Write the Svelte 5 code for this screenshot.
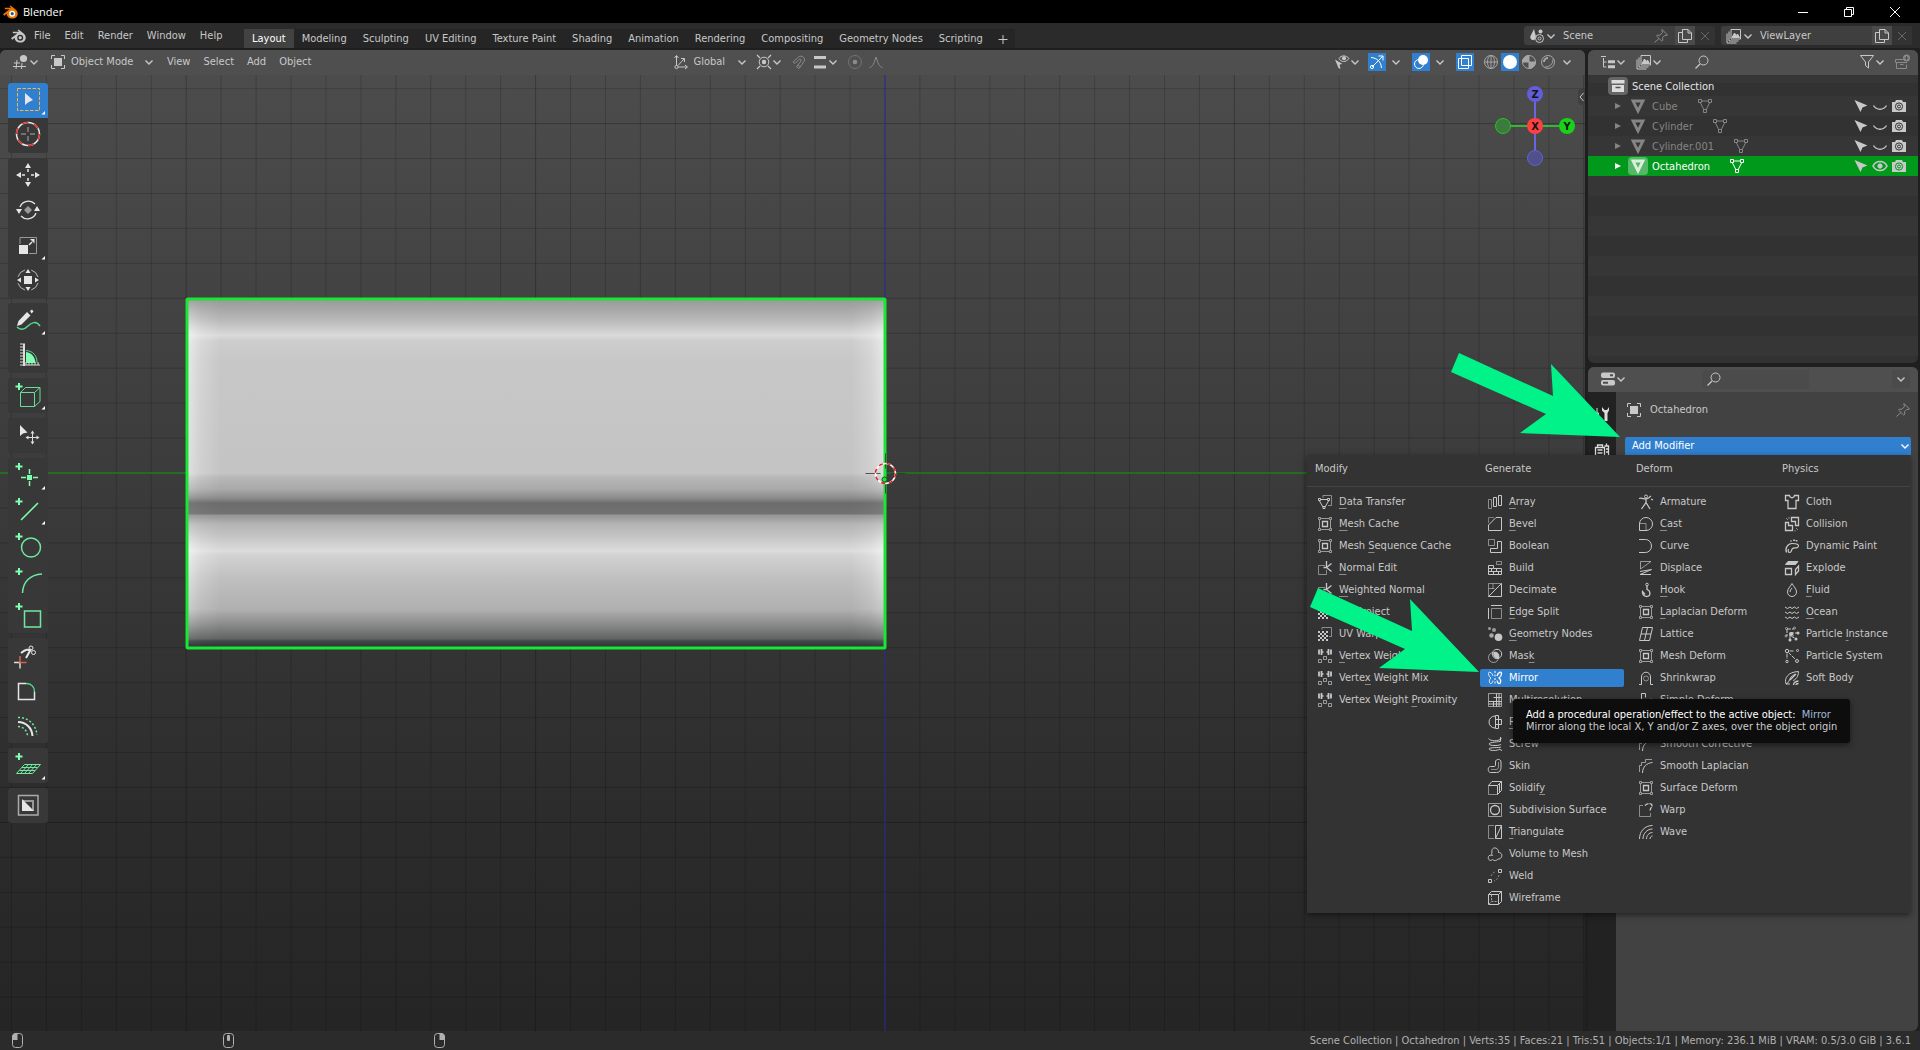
<script>
    const MENUS = ["File", "Edit", "Render", "Window", "Help"];
    const WORKSPACES = ["Layout", "Modeling", "Sculpting", "UV Editing", "Texture Paint", "Shading", "Animation", "Rendering", "Compositing", "Geometry Nodes", "Scripting"];
    const OBJECTS = [
        { name: "Cube" },
        { name: "Cylinder" },
        { name: "Cylinder.001" },
        { name: "Octahedron", active: true },
    ];

    // [label, icon, index of the underlined letter]
    const MODIFIERS = [
        { title: "Modify", items: [
            ["Data Transfer", "dataTransfer", 0],
            ["Mesh Cache", "meshDeform", 0],
            ["Mesh Sequence Cache", "meshDeform", 5],
            ["Normal Edit", "normalEdit", 0],
            ["Weighted Normal", "normalEdit", 0],
            ["UV Project", "uv"],
            ["UV Warp", "uv"],
            ["Vertex Weight Edit", "vertexWeight", 0],
            ["Vertex Weight Mix", "vertexWeight", 5],
            ["Vertex Weight Proximity", "vertexWeight", 14],
        ]},
        { title: "Generate", items: [
            ["Array", "array", 0],
            ["Bevel", "bevel", 0],
            ["Boolean", "boolean"],
            ["Build", "build"],
            ["Decimate", "decimate"],
            ["Edge Split", "edgeSplit", 0],
            ["Geometry Nodes", "geoNodes", 0],
            ["Mask", "mask", 3],
            ["Mirror", "mirror"],
            ["Multiresolution", "multires"],
            ["Remesh", "remesh", 0],
            ["Screw", "screw"],
            ["Skin", "skin"],
            ["Solidify", "solidify", 7],
            ["Subdivision Surface", "subsurf"],
            ["Triangulate", "triangulate", 0],
            ["Volume to Mesh", "volume"],
            ["Weld", "weld"],
            ["Wireframe", "wireframe"],
        ]},
        { title: "Deform", items: [
            ["Armature", "armature"],
            ["Cast", "cast", 0],
            ["Curve", "curve"],
            ["Displace", "displace"],
            ["Hook", "hook", 0],
            ["Laplacian Deform", "meshDeform", 0],
            ["Lattice", "lattice"],
            ["Mesh Deform", "meshDeform"],
            ["Shrinkwrap", "shrinkwrap"],
            ["Simple Deform", "simpleDeform"],
            ["Smooth", "smooth"],
            ["Smooth Corrective", "smooth"],
            ["Smooth Laplacian", "smooth"],
            ["Surface Deform", "meshDeform"],
            ["Warp", "warp"],
            ["Wave", "wave"],
        ]},
        { title: "Physics", items: [
            ["Cloth", "cloth"],
            ["Collision", "collision"],
            ["Dynamic Paint", "dynamicPaint"],
            ["Explode", "explode"],
            ["Fluid", "fluid", 0],
            ["Ocean", "ocean", 0],
            ["Particle Instance", "particleInstance", 9],
            ["Particle System", "particleSystem"],
            ["Soft Body", "softBody"],
        ]},
    ];

    // 16x16 glyphs, stroked with currentColor
    const ICONS = {
        blender: `<g stroke="none" fill="currentColor"><path d="M1 10.2 7.5 5.2H2.8V3.8h6.400L7.600 2.600l1-1.200 5 4c4 3.500 2 9-3.200 9.200-3.400 0-5.700-2.200-5.700-4.900L2.300 11.700Z"/></g><circle cx="10.200" cy="9.700" r="3" fill="var(--hole, #2b2b2b)" stroke="none"/><circle cx="10.200" cy="9.700" r="1.600" fill="var(--pupil, currentColor)" stroke="none"/>`,
        chevron: `<path d="M4.500 6.500 8 10l3.500-3.500" stroke-width="1.400"/>`,
        close: `<path d="M4 4l8 8M12 4l-8 8"/>`,
        pin: `<path d="M9 1.500 14.500 7l-1.500.5-1-.3-2.500 2.500.3 2.500-1 1L3.500 8l1-1 2.500.3L9.500 4.500 9 3ZM6 10.500 1.500 14.500"/>`,
        copy: `<path d="M5.500 1.500h5.500l3.500 3.500v6.500h-9Z M11 1.500V5h3.500"/><path d="M5.500 4.500h-4v10h9v-3" />`,
        scene: `<path d="M5 1 1.500 8c-.8 2.500 1 4.200 3 4.200C6 12 7 10 6.800 8Z" fill="currentColor" stroke="none"/><circle cx="11.500" cy="3.500" r="2" fill="currentColor" stroke="none"/><circle cx="10.500" cy="10.500" r="4"/><circle cx="10.500" cy="10.500" r="1.500"/>`,
        layers: `<path d="M5 1.500h9.500V11H5Z"/><path d="M6 9.500 8.500 5l1.800 2.500L11.500 6l2 3.500Z" fill="currentColor"/><path d="M3 3.500v9.500h9.500M1 5.500V15h9.500" stroke-width="1"/>`,
        viewport: `<path d="M4 6 3 15M9 9l-.5 6M1 9h6M0 12.500h13M12 9v0"/><circle cx="10.500" cy="4.500" r="3.600" fill="currentColor" stroke="none"/>`,
        object: `<path d="M1.500 5V1.500H5M11 1.500h3.500V5M14.500 11v3.500H11M5 14.500H1.500V11"/><rect x="4" y="4" width="8" height="8" fill="currentColor" stroke="none"/>`,
        axes: `<path d="M3.500 13V2M1.500 4l2-2.500 2 2.500M3.500 13H14M12 11l2.500 2-2.500 2M5 11.500 11 5M8 4.500h3.500V8"/><circle cx="3.500" cy="13" r="1.600" fill="#4d4d4d"/>`,
        pivot: `<circle cx="8" cy="8" r="4.800"/><circle cx="8" cy="8" r="2.200" fill="currentColor" stroke="none"/><path d="M1 1l3 3M15 1l-3 3M1 15l3-3M15 15l-3-3" stroke-width="1.200"/>`,
        magnet: `<path d="M2 8 7.500 3c3-2.500 7.500 1 5.500 4.500L8 14.500 5.500 12.800 10 7c.8-1.500-.8-2.500-2-1.600L4 9.500ZM7 11l2.300 1.800"/>`,
        increment: `<path d="M2 3.500h12M2 13h12" stroke-width="3"/>`,
        proportional: `<circle cx="8" cy="8" r="6.500" opacity=".6"/><circle cx="8" cy="8" r="2.300" fill="currentColor" stroke="none"/>`,
        falloff: `<path d="M1.500 13.500C5 13 6 9 8 3c2 6 3 10 6.500 10.500"/>`,
        visibility: `<path d="M5 4.500C7 1 12 1 15 4.500 12 8.500 7 8.500 5 4.500Z"/><circle cx="10" cy="4.300" r="2" fill="currentColor" stroke="none"/><path d="M1 5.500 8.500 10 5.500 10.500 6.500 15 4.500 14Z" fill="currentColor" stroke="none"/>`,
        gizmo: `<path d="M3 13 14 2M9.500 2H14v4.500M2 3.500c6 .5 10 4 10.500 10.500"/><circle cx="3" cy="13" r="1.600"/>`,
        overlays: `<circle cx="10" cy="6" r="5" fill="currentColor" stroke="none"/><circle cx="6" cy="10" r="4.500"/>`,
        xray: `<path d="M4.500 1.500h10v10h-10Z"/><path d="M1.500 4.500h10v10h-10Z"/><path d="M4.500 6v5.500H10" stroke-dasharray="2 1"/>`,
        sphereWire: `<circle cx="8" cy="8" r="6.500"/><path d="M8 1.500v13M1.500 8h13"/><ellipse cx="8" cy="8" rx="3.500" ry="6.500"/>`,
        sphereSolid: `<circle cx="8" cy="8" r="7" fill="currentColor" stroke="none"/>`,
        sphereMaterial: `<circle cx="8" cy="8" r="6.500"/><path d="M8 8V1.500A6.500 6.500 0 0 0 1.500 8ZM8 8h6.500A6.500 6.500 0 0 1 8 14.500Z" fill="currentColor"/>`,
        sphereRender: `<circle cx="8" cy="8" r="6.500"/><path d="M4 8a4 4 0 0 1 4-4" stroke-width="2"/><path d="M13 5c0 5-3 8-8 8"/>`,
        outliner: `<path d="M1 2.500h5M3.500 4v9h3M3.500 8h3"/><path d="M8 7.800h7M8 12.800h7" stroke-width="3"/>`,
        search: `<circle cx="9.500" cy="6.500" r="4.500"/><path d="M6 10 1.500 14.500" stroke-width="1.300"/>`,
        filter: `<path d="M1.500 1.500h13L9.500 8v6L6.500 11.500V8Z"/>`,
        newCollection: `<path d="M9 5.500H1.500v3H13M2.500 8.500v6h10v-4M6 10.500h3.500"/><circle cx="12.500" cy="4" r="3.500" fill="currentColor" stroke="none"/><path d="M12.500 2v4M10.500 4h4" stroke="#4d4d4d"/>`,
        collection: `<path d="M1.500 2h13v3.500h-13Z" fill="currentColor" stroke="none"/><path d="M2 7h12v7H2Z" fill="currentColor" stroke="none"/><path d="M5.500 9.500h5" stroke="#555" stroke-width="1.500"/>`,
        mesh: `<path d="M3 3h10L8 13Z" stroke-width="2.800"/>`,
        meshData: `<path d="M4.500 3h7M3.500 5 7 12M12.500 5 9 12"/><path d="M1.500 1.500h3v3h-3ZM11.500 1.500h3v3h-3ZM6.500 11.500h3v3h-3Z"/>`,
        expand: `<path d="M4 4l8 4-8 4Z" fill="currentColor" stroke="none"/>`,
        cursor: `<path d="M1.500 2 14.500 7.500 9.500 9.500 7.500 14Z" fill="currentColor" stroke="none"/>`,
        eyeClosed: `<path d="M1.500 7.500c3 5 10 5 13 0" stroke-width="1.300"/>`,
        eyeOpen: `<path d="M1 8c3-6 11-6 14 0-3 6-11 6-14 0Z" stroke-width="1.600"/><circle cx="8" cy="8" r="2.200" fill="currentColor"/>`,
        camera: `<path d="M1 4h3l1-2h6l1 2h3v10H1Z" fill="currentColor" stroke="none"/><circle cx="8" cy="8.500" r="3.600" stroke="var(--hole, #333)" /><circle cx="8" cy="8.500" r="1.500" stroke="var(--hole, #333)"/>`,
        properties: `<rect x="1" y="1.500" width="14" height="5.500" rx="2" fill="currentColor" stroke="none"/><rect x="1" y="9" width="14" height="5.500" rx="2" fill="currentColor" stroke="none"/><path d="M10 4.200h3M3 11.700h5" stroke="#4d4d4d" stroke-width="2"/>`,
        tool: `<path d="M3 2v5M1.500 7h3v7h-3Z" fill="currentColor"/><path d="M8 1v3.500l2.500 2.500V15h3V7L15 4.500V1l-2 3h-2.500Z" fill="currentColor" stroke="none"/>`,
        render: `<path d="M1.500 5.500h9v8.500h-9ZM3.500 8h5M3.500 11h5M3.500 5.500v-2.500h5v2.500" stroke-width="1.300"/><path d="M10.500 4h4v10h-4M12.500 4V1.500M12 7h2M12 10h2" stroke-width="1.300"/>`,

        meshDeform: `<path d="M4 2.500h8M4 13.500h8M2.500 4v8M13.500 4v8" opacity=".7"/><path d="M1.500 1.500h2v2h-2ZM12.500 1.500h2v2h-2ZM1.500 12.500h2v2h-2ZM12.500 12.500h2v2h-2Z" opacity=".7"/><path d="M5.500 5.500h5v5h-5Z" stroke-width="1.300"/>`,
        dataTransfer: `<path d="M6 1.500h8.500v10H11M6 1.500V4" opacity=".6"/><path d="M3.500 5.500h7M2.500 7 6 13M11.500 7 8 13M1.500 4.500h2v2h-2ZM10.500 4.500h2v2h-2ZM6 12.500h2v2H6Z"/>`,
        normalEdit: `<path d="M8 5.500H1.500v9h8V10" opacity=".6"/><path d="M14.500 3.500 9.500 7.500l5 4M9.500 1v6.500H6.500" stroke-width="1.300"/>`,
        uv: `<path d="M5 3.500v-2h9.500v9H12" opacity=".6"/><path d="M1 6h10M1 10h10M1 14h10" stroke-width="2" stroke-dasharray="2 2"/><path d="M3 8h8M3 12h8" stroke-width="2" stroke-dasharray="2 2"/>`,
        vertexWeight: `<path d="M2 1.500v5M4.500 1v6M11.500 1v6M14 1.500v5" stroke-width="1.800"/><path d="M4.500 4h2M9.500 4h2" stroke-width="1.500"/><path d="M1.500 11.500h3v3h-3ZM6.500 8.500h3v3h-3ZM11.500 11.500h3v3h-3Z" opacity=".7"/>`,
        array: `<path d="M1.500 5.500h3v9h-3Z" opacity=".6"/><path d="M6.500 3.500h3v9h-3ZM11.500 1.500h3v10h-3Z"/>`,
        bevel: `<path d="M1.500 7V1.500H7" opacity=".5"/><path d="M1.500 14.500V9L9 1.500h5.500v13Z"/>`,
        boolean: `<path d="M1.500 1.500h6v6h-6Z" opacity=".6"/><path d="M10.500 3.500h4v11h-11v-4h7Z"/>`,
        build: `<path d="M9.500 1.500h5v3h-5Z" opacity=".6"/><path d="M1.500 5.500h5v3h8v6h-13ZM1.500 8.500h5M1.500 11.500h13M9.500 8.500v3M4.500 8.500v3M6.500 11.500v3M11.500 11.500v3"/>`,
        decimate: `<path d="M1.500 14.500v-13h13M6 1.500V7M1.500 6.500h6" opacity=".6"/><path d="M14.500 1.500v13h-13Z"/>`,
        edgeSplit: `<path d="M4.500 4.500h10v10h-10Z" opacity=".6"/><path d="M1.500 4v11M4 1.500h11"/>`,
        geoNodes: `<g fill="currentColor" stroke="none"><circle cx="11.500" cy="11.300" r="3.800"/><circle cx="4.500" cy="9.500" r="2.200" opacity=".8"/><circle cx="7" cy="4" r="2" opacity=".7"/><circle cx="2.500" cy="2.500" r="1.500" opacity=".7"/></g>`,
        mask: `<circle cx="6.500" cy="9.500" r="5" opacity=".7"/><circle cx="10" cy="6" r="4.700"/><path d="M7 4.500c3-1.500 6 2 4.500 5.500C8 10.500 6 8 7 4.500Z" fill="currentColor"/>`,
        mirror: `<path d="M8 1v14" stroke-dasharray="2 1.500"/><path d="M6 6C5 2 1.500 1 1.500 3.500c0 2 1 3.500 2.500 4.500-1.500 1-2 2.500-1.500 4.500.8 2 3 1 3.500-2" opacity=".8"/><path d="M10 6c1-4 4.500-5 4.500-2.500 0 2-1 3.500-2.500 4.500 1.500 1 2 2.500 1.500 4.500-.8 2-3 1-3.500-2" stroke-width="1.300"/>`,
        multires: `<path d="M1.500 1.500h13v13h-13Z" opacity=".7"/><path d="M1.500 9.500h13M6.500 9.500v5M6.500 5.500h8M1.500 12h13M9.500 1.500v13M12 1.500v13" />`,
        remesh: `<path d="M8 2a6 6 0 0 0 0 12"/><path d="M8.500 1.500h3v13h-3ZM8.500 5.500h6v5h-6"/>`,
        screw: `<path d="M1.500 2.500c2 3 10 3 13 0M2 8c0-2 11-2 12-3M2 8c0 2 12 2 12 0M2 13c0-2 11-1 12-2M2 13c1 2 8 2 11 0M13.500 1v4M13.500 13l1 2"/>`,
        skin: `<path d="M3.500 8.500h3.500c1 0 1.500-.5 1.500-1.500V4c0-3.500 5.500-3.500 5.500 0v5.500c0 3-1.500 5-4.500 5h-6c-3 0-3-6 0-6Z"/><path d="M11.500 4v5c0 1.500-1 2.500-2.500 2.500H4" opacity=".6"/>`,
        solidify: `<path d="M1.500 5.500v9h9" opacity=".6"/><path d="M1.500 5.500 5 1.500h9.500v9l-4 4v-9h-9M10.500 5.500l4-4M12.500 3.500v9"/>`,
        subsurf: `<path d="M1.500 1.500h13v13h-13Z" opacity=".7"/><circle cx="8" cy="8" r="4.500" stroke-width="1.300"/>`,
        triangulate: `<path d="M7 1.500H1.500v13H7" opacity=".6"/><path d="M8.500 1.500h6v13h-6ZM8.500 14.500l6-13"/>`,
        volume: `<path d="M5 6C4 0 12 1 11.500 6.500c5 0 4 7-.5 6.500-2 2.500-4.500 1.500-5.500.5C3 16 .5 13 1.500 10.500 2 9 4 9 5.500 9.500 4.500 8.500 4.500 7 5 6Z"/>`,
        weld: `<path d="M11.500 1.500h3v3h-3ZM1.500 11.500h3v3h-3Z"/><path d="M4 8c1-2.500 3-4 5-4.500M12 7c-.5 3-2.500 5-5 6" stroke-dasharray="2 1.500" opacity=".6"/>`,
        wireframe: `<path d="M1.500 4.500h10v10h-10ZM1.500 4.500l3-3h10v10l-3 3M11.500 4.500l3-3"/><path d="M4.500 5v6.500H11M2 14l2.500-2.500" stroke-dasharray="2 1.200" opacity=".8"/>`,
        armature: `<circle cx="8" cy="2.500" r="1.500"/><path d="M1 4.500c3-1 4 .5 7 .5s3-2 5-3M8 5v3.500L3.500 15M8 8.500l4 6.500M13 5l2 1" stroke-width="1.300"/>`,
        cast: `<path d="M1.500 14.500V8a6.500 6.500 0 1 1 6.500 6.500Z"/><path d="M1.500 7.500h6.500v7" opacity=".6"/>`,
        curve: `<path d="M1 1.500h6.500a6 6.500 0 0 1 0 13H1"/>`,
        displace: `<path d="M2.500 9V1.500H13L2.500 9" opacity=".7"/><path d="M2 11.500l11.500-2L2 14.500h11"/>`,
        hook: `<circle cx="9" cy="2.500" r="1.300"/><path d="M9 4v3.500c4 1.500 4 7-.5 7-3 0-4.500-2.500-4-5l2.500 3" stroke-width="1.300"/>`,
        lattice: `<path d="M4.500 1.500h10l-3 13h-10ZM9.500 1.500l-3 13M3 8h10"/>`,
        shrinkwrap: `<path d="M1 14.500h2.500V7a4.500 4.800 0 0 1 9 0v7.500H15"/><circle cx="8" cy="8.500" r="2.500" opacity=".6"/>`,
        simpleDeform: `<path d="M3.500 14.500V1.500h4v4M7.500 14V9l6-2" /><path d="M7.500 14.500h7V7" opacity=".6"/>`,
        smooth: `<path d="M1.500 14V7.500h2v-3h4v-3H14" opacity=".7"/><path d="M4.500 15c0-6 4-10 10-10.500"/>`,
        warp: `<path d="M5 3.500H1.500v11h11V11" opacity=".6"/><path d="M7 3.500c2-2.500 7-2.500 7 0s-2 2-2 6" stroke-width="1.300" stroke-dasharray="4 1"/>`,
        wave: `<path d="M1.500 15C1.500 7 7 1.500 14.500 1.500M5 15c0-5.500 4-10 9.500-10M8.500 15c0-3.500 2.500-6.500 6-6.500M12 15c0-1.500 1-3 2.500-3"/>`,
        cloth: `<path d="M1.500 1.500h4c.5 3 4.500 3 5 0h4v5h-2.500v8H4v-8H1.500Z" stroke-width="1.300"/>`,
        collision: `<path d="M7.500 1.500h7v8h-3v-4h-4ZM1.500 6.500h3v3h4v5h-7Z" stroke-width="1.300"/><path d="M2 2l2 2M5 1v2M12 12l2 2M11 14v1.500" opacity=".6"/>`,
        dynamicPaint: `<path d="M2.500 14.500C.5 10 4 5.500 8 5.500c5 0 7.500 1 6 3.500-1 1.800-4 0-5.500 1.500-1.500 1.300-.5 4-3 4-1.500 0-1.500-2-1-3.500" stroke-width="1.200"/><path d="M7 2.500v1M10 1.500v1.500M12.500 2v1.500" stroke-width="1.800"/>`,
        explode: `<path d="M4 1.500h10L11.500 4.500h-10Z" fill="currentColor"/><path d="M1.500 8.500h6v6h-6Z" stroke-width="1.300"/><path d="M14.500 6v5L11.500 14.500V9.500Z" stroke-width="1.300"/>`,
        fluid: `<path d="M8 1.500c2 3.500 4.500 5.500 4.500 8.500a4.500 4.500 0 0 1-9 0c0-3 2.500-5 4.500-8.500Z"/><path d="M6 10c0-1.500 1-2.500 2-4"/>`,
        ocean: `<path d="M1 3l2.500 1.500L6 3l2 1.500L10.500 3l2 1.500L15 3M1 8l2.500 1.500L6 8l2 1.500L10.500 8l2 1.500L15 8M1 13l2.500 1.500L6 13l2 1.500 2.500-1.500 2 1.500L15 13"/>`,
        particleInstance: `<path d="M3 3h7M3 3v7M6 13V9l4 3M6 7h8M8 6l2 6" stroke-dasharray="4 1"/><circle cx="7" cy="8" r="2" fill="currentColor" stroke="none"/><g fill="currentColor" stroke="none"><circle cx="14" cy="7" r="1.500"/><circle cx="6" cy="14" r="1.500"/><circle cx="12" cy="13" r="1.500"/></g><circle cx="2.500" cy="2.500" r="1" opacity=".7"/><circle cx="10.500" cy="2" r="1" opacity=".7"/><circle cx="2" cy="10" r="1" opacity=".7"/>`,
        particleSystem: `<circle cx="3" cy="3" r="1.700"/><circle cx="13.500" cy="2.500" r="1"/><circle cx="3" cy="13.500" r="1.200"/><circle cx="13" cy="13" r="1.500"/><path d="M5.500 3h5M3 5.500V11M4.500 4.500l7 7" stroke-dasharray="4 1"/>`,
        softBody: `<path d="M2 14C0 8 4 2 14.500 1.500c0 5-3 8.500-5.500 9M2 14c3-1 3-4 5-7l4-3M2 14h4"/><path d="M9.500 15c0-2 1-3.500 5-4M12 15c0-1 1-1.500 2.500-1.500M6 10l6-6" stroke-width="1.300"/>`,
    };

    // 40x35 glyphs, same box as the tool buttons
    const PLUS = `<path d="M7.500 8.500h7M11 5v7" stroke="#80ffb0" stroke-width="2"/>`;
    const TOOLS = [
        [
            { name: "Select Box", active: true, more: true, art: `<rect x="9.500" y="5.500" width="22" height="22" stroke="#f0b84c" stroke-dasharray="3.500 1.500"/><path d="M17 10v12l3-2.500 5-2.500Z" fill="#e6e6e6"/>` },
            { name: "Cursor", art: `<circle cx="20" cy="16" r="11.500" stroke="#e8e8e8" stroke-width="1.500"/><circle cx="20" cy="16" r="11.500" stroke="#d33" stroke-width="1.500" stroke-dasharray="6 6"/><path d="M13 16h5M22 16h5M20 9v5M20 18v5" stroke="#aaa"/>` },
        ],
        [
            { name: "Move", art: `<path d="M20 11v3M20 20v3M14 17h3M23 17h3" stroke="#e6e6e6" stroke-width="1.500"/><path d="M20 5l3 5h-6ZM20 29l3-5h-6ZM8 17l5-3v6ZM32 17l-5-3v6Z" fill="#e6e6e6"/>` },
            { name: "Rotate", art: `<path d="M12 14a9 9 0 0 1 15-3M28 20a9 9 0 0 1-15 3" stroke="#e6e6e6" stroke-width="1.300"/><path d="M8 16h6l-3 5ZM32 18h-6l3-5Z" fill="#e6e6e6"/><path d="M20 13l4 4-4 4-4-4Z" fill="#999"/>` },
            { name: "Scale", more: true, art: `<path d="M12 16V9.500h16.500v16H21" stroke="#999"/><rect x="11" y="17" width="9" height="9" fill="#e6e6e6"/><path d="M21 17l3-3" stroke="#e6e6e6" stroke-width="1.500"/><path d="M26.500 11v4.500L22 11Z" fill="#e6e6e6"/>` },
            { name: "Transform", art: `<circle cx="20" cy="17" r="10.500" stroke="#bbb" stroke-dasharray="10 6.500" stroke-dashoffset="-3"/><rect x="16" y="13" width="8" height="8" fill="#e6e6e6"/><path d="M20 6l2.500 4h-5ZM20 28l2.500-4h-5ZM9 17l4-2.500v5ZM31 17l-4-2.500v5Z" fill="#e6e6e6"/>` },
        ],
        [
            { name: "Annotate", more: true, art: `<path d="M9 23l1.500-5L19 9l3.500 3.500-9 9Z" fill="#e6e6e6"/><path d="M22 8l2-1.500 1.500 2-2 2Z" fill="#e6e6e6"/><path d="M9 24c4 4 8 2 11-1s8-6 12 0" stroke="#55d98c" stroke-width="1.500"/>` },
            { name: "Measure", art: `<path d="M12 6h5M12 9h3M12 12h3M12 15h3M12 18h3M12 21h3M12 24h3M12 27h20M18 24v3M21 24v3M24 24v3M27 24v3M30 24v3" stroke="#ddd"/><path d="M16 6v22" stroke="#ddd" stroke-width="2"/><path d="M18 14c6 1 9 5 9.500 11H18Z" fill="#80ffb0"/><path d="M18 12.500c7 .5 11 5 11 12" stroke="#5fd08c"/>` },
        ],
        [
            { name: "Add Cube", more: true, art: PLUS + `<path d="M12.500 14.500h14v14h-14ZM12.500 14.500l5-5h14.500v14l-5.500 5M26.500 14.500l5.500-5" stroke="#66dd99"/>` },
        ],
        [
            { name: "Tweak", art: `<path d="M12 7v11l3-2.500 4.500-1Z" fill="#e6e6e6"/><path d="M19 19.500h11M24.500 14v11" stroke="#ddd"/><path d="M24.500 12.500l2 3h-4ZM24.500 26.500l2-3h-4ZM17.500 19.500l3-2v4ZM31.500 19.500l-3-2v4Z" fill="#ddd"/>` },
        ],
        [
            { name: "Add Point", more: true, art: PLUS + `<path d="M13 19.500h5M25 19.500h5M21.500 11v5M21.500 23v5" stroke="#80ffb0" stroke-width="1.500"/><rect x="19" y="17" width="5" height="5" fill="#80ffb0"/>` },
            { name: "Add Line", more: true, art: PLUS + `<path d="M13 27 30 10" stroke="#80ffb0" stroke-width="1.500"/>` },
            { name: "Add Circle", art: PLUS + `<circle cx="23" cy="19.500" r="9.500" stroke="#70e8a0" stroke-width="1.500"/>` },
            { name: "Add Arc", art: PLUS + `<path d="M14.500 30C15 19 22 11.500 34 11" stroke="#70e8a0" stroke-width="1.500"/>` },
            { name: "Add Rectangle", art: PLUS + `<path d="M16.500 13h16v16h-16Z" stroke="#70e8a0" stroke-width="1.500"/>` },
        ],
        [
            { name: "Trim", art: `<path d="M6 24.500h6v6" stroke="#ddd" stroke-width="1.500"/><path d="M12 18v6.500h6.500" stroke="#d6604d" stroke-width="1.500"/><path d="M13 15c5-4 7-4 10-2M18 20l5-9" stroke="#e6e6e6" stroke-width="2"/><circle cx="23" cy="10" r="2" stroke="#e6e6e6"/><circle cx="25.500" cy="14.500" r="2" stroke="#e6e6e6"/>` },
            { name: "Bevel", art: `<path d="M18 10.500h-7.500v16h16V19" stroke="#e6e6e6" stroke-width="1.500"/><path d="M18 10.500c5 0 8.500 3 8.500 8.500" stroke="#55d98c" stroke-width="1.500"/>` },
            { name: "Offset", art: `<path d="M10 14c8 0 14 6 14.500 14" stroke="#e6e6e6" stroke-width="2"/><path d="M10 9.500c10-.5 18 7 19 17.500M10 18.500c5 0 9 4 9.500 9" stroke="#70e8a0" stroke-width="1.500" stroke-dasharray="2 2"/>` },
        ],
        [
            { name: "Add Workplane", more: true, art: PLUS + `<path d="M16.500 16.500h16l-8 9h-16ZM13.800 19.500h16M11 22.500h16M20.500 16.500l-8 9M24.500 16.500l-8 9M28.500 16.500l-8 9" stroke="#70e8a0"/>` },
        ],
        [
            { name: "Set Reference", art: `<path d="M10.500 7.500h19.500v19.500h-19.500Z" stroke="#aaa" stroke-width="1.500"/><path d="M15 13h10v10" stroke="#999" stroke-width="2"/><path d="M14 11v12h12Z" fill="#e6e6e6"/>` },
        ],
    ];

    // viewport grid: one cell is STEP wide, the world origin sits at ORIGIN
    const STEP = 34.94;
    const ORIGIN = { x: 885, y: 423 };
    const columns = Array.from({ length: 75 }, (_, i) => i - 25);
    const rows = Array.from({ length: 42 }, (_, i) => i - 12);

    let workspace = $state("Layout");
    let mode = $state("Object Mode");
    let orientation = $state("Global");
    let hovered = $state("Mirror");
</script>

{#snippet icon(name)}
    <svg class="icon" viewBox="0 0 16 16" aria-hidden="true">{@html ICONS[name]}</svg>
{/snippet}

{#snippet chevron()}
    <svg class="chevron" viewBox="3 3 10 10" aria-hidden="true">{@html ICONS.chevron}</svg>
{/snippet}

<div class="app">
    <header class="titlebar">
        <span class="logo">{@render icon("blender")}</span>
        <span class="title">Blender</span>
        <div class="window-buttons">
            <button aria-label="Minimize"><svg viewBox="0 0 12 12"><path d="M1 6.500h10"/></svg></button>
            <button aria-label="Restore"><svg viewBox="0 0 12 12"><path d="M1.500 3.500h7v7h-7ZM3.500 3.500v-2h7v7h-2"/></svg></button>
            <button aria-label="Close"><svg viewBox="0 0 12 12"><path d="M1 1l10 10M11 1 1 11"/></svg></button>
        </div>
    </header>

    <div class="topbar">
        <button class="app-menu" aria-label="Blender">{@render icon("blender")}</button>
        <nav class="menus">
            {#each MENUS as item}
                <button>{item}</button>
            {/each}
        </nav>
        <div class="workspaces">
            {#each WORKSPACES as item}
                <button class:active={item === workspace} onclick={() => workspace = item}>{item}</button>
            {/each}
            <button class="add" aria-label="Add Workspace">
                <svg class="icon" viewBox="0 0 16 16"><path d="M8 4v9M3.500 8.500h9"/></svg>
            </button>
        </div>
        <div class="id-block">
            <button class="pair" aria-label="Browse scene">{@render icon("scene")}{@render chevron()}</button>
            <input type="text" value="Scene" aria-label="Scene name">
            <button class="dim pin" aria-label="Pin scene">{@render icon("pin")}</button>
            <button class="new" aria-label="New scene">{@render icon("copy")}</button>
            <button class="remove" aria-label="Delete scene">{@render icon("close")}</button>
        </div>
        <div class="id-block">
            <button class="pair" aria-label="Browse view layer">{@render icon("layers")}{@render chevron()}</button>
            <input type="text" value="ViewLayer" aria-label="View layer name">
            <button class="new" aria-label="Add view layer">{@render icon("copy")}</button>
            <button class="remove" aria-label="Remove view layer">{@render icon("close")}</button>
        </div>
    </div>

    <main>
        <section class="viewport">
            <div class="header">
                <div class="left">
                    <button class="pair" aria-label="Editor type">{@render icon("viewport")}{@render chevron()}</button>
                    <label class="drop mode">
                        {@render icon("object")}
                        <select bind:value={mode} aria-label="Mode">
                            <option>Object Mode</option>
                            <option>Edit Mode</option>
                        </select>
                        {@render chevron()}
                    </label>
                    {#each ["View", "Select", "Add", "Object"] as item}
                        <button class="menu-button">{item}</button>
                    {/each}
                </div>
                <div class="center">
                    <label class="drop orientation">
                        {@render icon("axes")}
                        <select bind:value={orientation} aria-label="Transform orientation">
                            <option>Global</option>
                            <option>Local</option>
                        </select>
                        {@render chevron()}
                    </label>
                    <button class="pair" aria-label="Pivot point">{@render icon("pivot")}{@render chevron()}</button>
                    <div class="joined">
                        <button class="dim" aria-label="Snap">{@render icon("magnet")}</button>
                        <button class="pair" aria-label="Snap to">{@render icon("increment")}{@render chevron()}</button>
                    </div>
                    <div class="joined">
                        <button class="dim" aria-label="Proportional editing">{@render icon("proportional")}</button>
                        <button class="dim" aria-label="Falloff">{@render icon("falloff")}</button>
                    </div>
                </div>
                <div class="right">
                    <button class="pair" aria-label="Object visibility">{@render icon("visibility")}{@render chevron()}</button>
                    <div class="toggle">
                        <button class="on" aria-label="Gizmos">{@render icon("gizmo")}</button>
                        <button class="small" aria-label="Gizmo options">{@render chevron()}</button>
                    </div>
                    <div class="toggle">
                        <button class="on" aria-label="Overlays">{@render icon("overlays")}</button>
                        <button class="small" aria-label="Overlay options">{@render chevron()}</button>
                    </div>
                    <button class="on" aria-label="X-Ray">{@render icon("xray")}</button>
                    <div class="shading">
                        <button aria-label="Wireframe shading">{@render icon("sphereWire")}</button>
                        <button class="on" aria-label="Solid shading">{@render icon("sphereSolid")}</button>
                        <button aria-label="Material preview">{@render icon("sphereMaterial")}</button>
                        <button aria-label="Rendered shading">{@render icon("sphereRender")}</button>
                        <button class="small" aria-label="Shading options">{@render chevron()}</button>
                    </div>
                </div>
            </div>

            <svg class="scene" aria-label="3D viewport">
                <defs>
                    <linearGradient id="profile" x1="0" y1="0" x2="0" y2="1">
                        <stop offset="0" stop-color="#999"/>
                        <stop offset=".03" stop-color="#a8a8a8"/>
                        <stop offset=".06" stop-color="#b9b9b9"/>
                        <stop offset=".105" stop-color="#dadada"/>
                        <stop offset=".12" stop-color="#cdcdcd"/>
                        <stop offset=".18" stop-color="#c7c7c7"/>
                        <stop offset=".5" stop-color="#c4c4c4"/>
                        <stop offset=".51" stop-color="#b8b8b8"/>
                        <stop offset=".545" stop-color="#a9a9a9"/>
                        <stop offset=".57" stop-color="#8c8c8c"/>
                        <stop offset=".585" stop-color="#6c6c6c"/>
                        <stop offset=".615" stop-color="#727272"/>
                        <stop offset=".62" stop-color="#969696"/>
                        <stop offset=".645" stop-color="#b4b4b4"/>
                        <stop offset=".68" stop-color="#c4c4c4"/>
                        <stop offset=".722" stop-color="#dcdcdc"/>
                        <stop offset=".735" stop-color="#d2d2d2"/>
                        <stop offset=".8" stop-color="#c0c0c0"/>
                        <stop offset=".89" stop-color="#b0b0b0"/>
                        <stop offset=".93" stop-color="#8c8d8d"/>
                        <stop offset=".973" stop-color="#616564"/>
                        <stop offset=".98" stop-color="#434747"/>
                        <stop offset="1" stop-color="#2c3033"/>
                    </linearGradient>
                    <linearGradient id="rim">
                        <stop offset="0" stop-color="#fff" stop-opacity=".6"/>
                        <stop offset=".02" stop-color="#fff" stop-opacity=".25"/>
                        <stop offset=".05" stop-color="#fff" stop-opacity="0"/>
                        <stop offset=".95" stop-color="#fff" stop-opacity="0"/>
                        <stop offset=".98" stop-color="#fff" stop-opacity=".25"/>
                        <stop offset="1" stop-color="#fff" stop-opacity=".6"/>
                    </linearGradient>
                    <linearGradient id="rimFade" x1="0" y1="0" x2="0" y2="1">
                        <stop offset="0" stop-color="#222"/>
                        <stop offset=".1" stop-color="#fff"/>
                        <stop offset=".5" stop-color="#ccc"/>
                        <stop offset=".58" stop-color="#222"/>
                        <stop offset=".62" stop-color="#222"/>
                        <stop offset=".72" stop-color="#fff"/>
                        <stop offset=".88" stop-color="#999"/>
                        <stop offset="1" stop-color="#000"/>
                    </linearGradient>
                    <mask id="rimMask" maskContentUnits="objectBoundingBox"><rect width="1" height="1" fill="url(#rimFade)"/></mask>
                </defs>
                {#each columns as i}
                    <line class="grid" class:major={i % 10 === 0} x1={ORIGIN.x + i * STEP} x2={ORIGIN.x + i * STEP} y1="25" y2="100%"/>
                {/each}
                {#each rows as i}
                    <line class="grid" class:major={i % 10 === 0} y1={ORIGIN.y + i * STEP} y2={ORIGIN.y + i * STEP} x1="0" x2="100%"/>
                {/each}
                <line class="axis-y" x1="0" x2="100%" y1="423" y2="423"/>
                <line class="axis-z" x1="885" x2="885" y1="25" y2="100%"/>
                <rect x="187" y="249" width="698" height="349" fill="url(#profile)"/>
                <rect x="187" y="249" width="698" height="349" fill="url(#rim)" mask="url(#rimMask)"/>
                <rect x="187" y="249" width="698" height="349" rx="1" fill="none" stroke="#17e833" stroke-width="3"/>
                <g class="cursor-3d" transform="translate(885.500 423.500)">
                    <path d="M-20 0h15M5 0h15M0-20v15M0 5v15" stroke="#333" stroke-opacity=".8"/>
                    <circle r="10" stroke="#fff" stroke-width="1.500"/>
                    <circle r="10" stroke="#e02020" stroke-width="1.500" stroke-dasharray="4 4"/>
                    <circle cx="-1" cy="6" r="2.500" fill="#17e833" stroke="#165a1c"/>
                </g>
            </svg>

            <div class="toolbar">
                {#each TOOLS as group}
                    <div class="tool-group">
                        {#each group as tool}
                            <button class:active={tool.active} aria-label={tool.name}>
                                <svg viewBox="0 0 40 35">
                                    {@html tool.art}
                                    {#if tool.more}<path d="M37 28v3.500h-3.500Z" fill="#fff"/>{/if}
                                </svg>
                            </button>
                        {/each}
                    </div>
                {/each}
            </div>

            <svg class="gizmo" viewBox="0 0 84 84" aria-label="Navigate">
                <path d="M42 10v64" stroke="#6b65dd" stroke-width="2"/>
                <path d="M10 42h64" stroke="#38b438" stroke-width="2"/>
                <circle cx="42" cy="74" r="7.500" fill="#50508a" stroke="#6360dd"/>
                <circle cx="10" cy="42" r="7.500" fill="#3d7a3d" stroke="#1fc71f"/>
                <circle cx="42" cy="10" r="8" fill="#625ed8"/>
                <circle cx="74" cy="42" r="8" fill="#1ad11a"/>
                <circle cx="42" cy="42" r="8" fill="#ff4040"/>
                <text x="42" y="14">Z</text>
                <text x="42" y="46">X</text>
                <text x="74" y="46">Y</text>
            </svg>
            <button class="sidebar-tab" aria-label="Show sidebar">
                <svg viewBox="0 0 7 12"><path d="M5.500 2 2 6l3.500 4"/></svg>
            </button>
        </section>

        <aside>
            <section class="outliner">
                <div class="header">
                    <button class="pair" aria-label="Editor type">{@render icon("outliner")}{@render chevron()}</button>
                    <button class="pair" aria-label="Display mode">{@render icon("layers")}{@render chevron()}</button>
                    <label class="search">{@render icon("search")}<input type="text" aria-label="Filter objects"></label>
                    <button class="pair" aria-label="Filter">{@render icon("filter")}{@render chevron()}</button>
                    <button class="dim" aria-label="New collection">{@render icon("newCollection")}</button>
                </div>
                <ul>
                    <li class="root">
                        <span class="badge">{@render icon("collection")}</span>
                        <span class="name">Scene Collection</span>
                    </li>
                    {#each OBJECTS as object}
                        <li class:active={object.active}>
                            <button class="expand" aria-label="Expand {object.name}">{@render icon("expand")}</button>
                            <span class="badge">{@render icon("mesh")}</span>
                            <span class="name">{object.name}</span>
                            <span class="data">{@render icon("meshData")}</span>
                            <span class="flags">
                                <button aria-label="Selectable">{@render icon("cursor")}</button>
                                <button aria-label="Visible">{@render icon(object.active ? "eyeOpen" : "eyeClosed")}</button>
                                <button aria-label="Renderable">{@render icon("camera")}</button>
                            </span>
                        </li>
                    {/each}
                </ul>
            </section>

            <section class="properties">
                <div class="header">
                    <button class="pair" aria-label="Editor type">{@render icon("properties")}{@render chevron()}</button>
                    <label class="search boxed">{@render icon("search")}<input type="text" aria-label="Search properties"></label>
                    <button class="small" aria-label="Options">{@render chevron()}</button>
                </div>
                <div class="body">
                    <div class="tabs">
                        <button aria-label="Tool">{@render icon("tool")}</button>
                        <button aria-label="Render">{@render icon("render")}</button>
                    </div>
                    <div class="content">
                        <div class="path">
                            {@render icon("object")}
                            <span>Octahedron</span>
                            <button class="dim" aria-label="Pin">{@render icon("pin")}</button>
                        </div>
                        <button class="add-modifier" aria-haspopup="menu" aria-expanded="true">
                            <span>Add Modifier</span>
                            {@render chevron()}
                        </button>
                    </div>
                </div>
            </section>
        </aside>
    </main>

    <footer>
        <svg viewBox="0 0 12 16"><rect x=".5" y=".5" width="10" height="14" rx="3"/><path d="M0 7V3l3-3h2.500v7Z" fill="#b0b0b0" stroke="none"/></svg>
        <svg viewBox="0 0 12 16"><rect x=".5" y=".5" width="10" height="14" rx="3"/><rect x="4" y="2" width="3" height="6" rx="1" fill="#b0b0b0" stroke="none"/></svg>
        <svg viewBox="0 0 12 16"><rect x=".5" y=".5" width="10" height="14" rx="3"/><path d="M11 7V3L8 0H5.500v7Z" fill="#b0b0b0" stroke="none"/></svg>
        <p>Scene Collection | Octahedron | Verts:35 | Faces:21 | Tris:51 | Objects:1/1 | Memory: 236.1 MiB | VRAM: 0.5/3.0 GiB | 3.6.1</p>
    </footer>

    <div class="modifier-menu" role="menu">
        {#each MODIFIERS as column}
            <div class="column">
                <h2>{column.title}</h2>
                {#each column.items as [label, glyph, key]}
                    <div class="item">
                        <button role="menuitem" class:active={label === hovered} onmouseenter={() => hovered = label}>
                            {@render icon(glyph)}
                            <span>{#if key === undefined}{label}{:else}{label.slice(0, key)}<u>{label[key]}</u>{label.slice(key + 1)}{/if}</span>
                        </button>
                    </div>
                {/each}
            </div>
        {/each}
        <div class="tooltip" role="tooltip">
            <p>Add a procedural operation/effect to the active object: <em>Mirror</em></p>
            <p class="soft">Mirror along the local X, Y and/or Z axes, over the object origin</p>
        </div>
        <svg class="pointer first" viewBox="0 0 170 85"><path d="M8 0 102 43 100 11 169 84 69 80 95 61 0 19Z"/></svg>
        <svg class="pointer second" viewBox="0 0 170 85"><path d="M8 0 102 43 100 11 169 84 69 80 95 61 0 19Z"/></svg>
    </div>
</div>

<style>
    :global(body) {
        background: #1f1f1f;
    }
    .app {
        position: relative;
        display: flex;
        flex-direction: column;
        min-height: 100vh;
        overflow: hidden;
        color: #c8c8c8;
        background: #1f1f1f;
        font-family: "DejaVu Sans Condensed", "Noto Sans", sans-serif;
        font-size: 11px;
        line-height: 14px;
    }
    button,
    input,
    select {
        margin: 0;
        padding: 0;
        color: inherit;
        font: inherit;
        background: none;
        border: 0;
        outline: none;
        border-radius: 0;
        appearance: none;
    }
    button {
        display: flex;
        align-items: center;
        justify-content: center;
        white-space: nowrap;
    }
    svg {
        flex: none;
        fill: none;
        stroke: currentColor;
    }
    p,
    h2,
    ul {
        margin: 0;
        padding: 0;
        font-size: inherit;
        font-weight: 400;
        list-style: none;
    }
    .icon {
        width: 16px;
        height: 16px;
    }
    .chevron {
        width: 10px;
        height: 10px;
    }
    .dim {
        color: #8a8a8a;
    }

    /* window title */
    .titlebar {
        display: flex;
        align-items: center;
        height: 23px;
        padding-left: 2px;
        color: #fff;
        background: #000;
        font-family: "Open Sans", sans-serif;
        font-size: 11px;
    }
    .logo {
        --hole: #fff;
        --pupil: #265787;
        display: flex;
        width: 21px;
        color: #ea7600;
    }
    .window-buttons {
        display: flex;
        margin-left: auto;
        padding-right: 2px;
    }
    .window-buttons button {
        width: 46px;
        height: 20px;
    }
    .window-buttons svg {
        width: 12px;
        height: 12px;
    }

    /* top bar */
    .topbar {
        display: flex;
        align-items: flex-start;
        height: 25px;
        padding: 0 8px 0 9px;
        background: #2b2b2b;
    }
    .app-menu {
        width: 18px;
        height: 26px;
    }
    .menus {
        display: flex;
        width: 217px;
    }
    .menus button {
        height: 26px;
        padding: 0 7px;
    }
    .workspaces {
        display: flex;
        align-self: flex-end;
        margin-right: auto;
        background: #252525;
    }
    .workspaces button {
        height: 19px;
        padding: 0 8px;
    }
    .workspaces .add {
        padding: 0 4px;
    }
    .workspaces .active {
        color: #fff;
        background: #424242;
    }
    .id-block {
        display: flex;
        align-items: center;
        width: 191px;
        height: 19px;
        margin: 3px 0 0 6px;
        padding-left: 5px;
        box-sizing: border-box;
        border-radius: 3px;
        background: #3f3f3f;
        overflow: hidden;
    }
    .id-block input {
        flex: 1;
        min-width: 0;
        padding-left: 7px;
    }
    .id-block .pin {
        margin-right: 6px;
    }
    .id-block .new,
    .id-block .remove {
        width: 20px;
        height: 19px;
    }
    .id-block .new {
        background: #4a4a4a;
    }
    .id-block .remove {
        color: #666;
        background: #333;
    }
    .pair {
        gap: 1px;
    }

    /* editors */
    main {
        flex: 1;
        display: grid;
        grid-template-columns: 1fr 330px;
        gap: 3px;
        padding: 2px 2px 0 0;
    }
    .header {
        position: relative;
        z-index: 1;
        height: 25px;
        padding-bottom: 1px;
        box-sizing: border-box;
        background: #4f4f4f;
    }
    .header .pair {
        gap: 0;
    }
    .viewport {
        position: relative;
        border-radius: 6px 6px 0 0;
        overflow: hidden;
        background: linear-gradient(#4d4d4d, #3c3c3c 42%, #2b2b2b 80%, #252525);
    }
    .viewport .header {
        display: grid;
        grid-template-columns: 1fr 240px 1fr;
        padding: 0 13px 1px;
    }
    .left,
    .center,
    .right,
    .joined,
    .toggle,
    .shading {
        display: flex;
        align-items: center;
    }
    .center {
        gap: 9px;
    }
    .joined {
        gap: 5px;
    }
    .drop {
        display: flex;
        align-items: center;
    }
    .mode {
        width: 104px;
        margin: 0 7px 0 11px;
    }
    .orientation {
        width: 74px;
    }
    .drop select {
        flex: 1;
        min-width: 0;
        padding-left: 5px;
    }
    .menu-button {
        padding: 0 7px 0 6px;
    }
    .right {
        justify-content: flex-end;
        gap: 8px;
    }
    .right button {
        height: 18px;
        min-width: 18px;
    }
    .right .small {
        min-width: 10px;
    }
    .right .on {
        color: #fff;
        background: #317fcf;
    }
    .toggle {
        gap: 5px;
    }
    .toggle .small {
        padding-right: 3px;
    }
    .shading {
        gap: 1px;
        color: #a6a6a6;
    }
    .shading .small {
        margin-left: 4px;
        color: #c8c8c8;
    }
    .scene {
        position: absolute;
        inset: 0;
        width: 100%;
        height: 100%;
        stroke: none;
    }
    .grid {
        stroke: #000;
        stroke-opacity: .17;
    }
    .grid.major {
        stroke-opacity: .25;
    }
    .axis-y {
        stroke: #256b21;
        stroke-width: 2;
    }
    .axis-z {
        stroke: #3030a0;
        stroke-width: 1;
    }
    .cursor-3d {
        fill: none;
    }

    .toolbar {
        position: relative;
        z-index: 1;
        display: flex;
        flex-direction: column;
        gap: 5px;
        width: 40px;
        margin: 8px;
    }
    .tool-group {
        border-radius: 3px;
        background: #383838;
        overflow: hidden;
    }
    .tool-group button {
        width: 40px;
        height: 35px;
    }
    .tool-group .active {
        background: #317fcf;
    }
    .tool-group svg {
        width: 40px;
        height: 35px;
        stroke: none;
    }

    .gizmo {
        position: absolute;
        top: 34px;
        right: 8px;
        width: 84px;
        height: 84px;
        stroke: none;
    }
    .gizmo text {
        fill: #151515;
        font-size: 11px;
        font-weight: 700;
        text-anchor: middle;
    }
    .sidebar-tab {
        position: absolute;
        top: 39px;
        right: 0;
        width: 7px;
        height: 16px;
        background: #3f3f3f;
        border-radius: 3px 0 0 3px;
    }
    .sidebar-tab svg {
        width: 7px;
        height: 12px;
    }

    aside {
        display: flex;
        flex-direction: column;
        gap: 4px;
    }
    aside .header {
        display: flex;
        align-items: center;
        padding-left: 12px;
        padding-right: 8px;
    }
    .outliner {
        height: 313px;
        border-radius: 6px;
        overflow: hidden;
        background: repeating-linear-gradient(#363636 0 20px, #323232 20px 40px) 0 46px #323232;
    }
    .outliner .header .pair + .pair {
        margin-left: 10px;
    }
    .search {
        display: flex;
        align-items: center;
    }
    .outliner .search {
        flex: 1;
        margin-left: 32px;
    }
    .search input {
        flex: 1;
        min-width: 0;
    }
    .outliner .header .dim {
        margin-left: 9px;
    }
    .outliner ul {
        padding-top: 1px;
    }
    .outliner li {
        display: flex;
        align-items: center;
        height: 20px;
        padding-right: 11px;
        color: #858585;
    }
    .outliner li.root {
        padding-left: 20px;
        color: #e6e6e6;
    }
    .outliner li.active {
        --hole: #00991c;
        color: #fff;
        background: #00991c;
    }
    .badge {
        display: flex;
        justify-content: center;
        align-items: center;
        width: 20px;
        height: 18px;
        border-radius: 4px;
    }
    .root .badge {
        color: #ddd;
        background: #666;
    }
    .active .badge {
        color: #d9f0dd;
        background: #56b866;
    }
    .expand {
        width: 20px;
        margin-left: 20px;
    }
    .expand .icon {
        width: 12px;
        height: 12px;
    }
    .name {
        padding-top: 2px;
        margin: 0 19px 0 4px;
    }
    .data {
        display: flex;
    }
    .flags {
        display: flex;
        gap: 3px;
        margin-left: auto;
        color: #c8c8c8;
    }

    .properties {
        flex: 1;
        display: flex;
        flex-direction: column;
        border-radius: 6px;
        overflow: hidden;
        background: #424242;
    }
    .properties .boxed {
        width: 107px;
        height: 19px;
        margin: 0 auto 0 76px;
        padding-left: 4px;
        box-sizing: border-box;
        border-radius: 3px;
        background: #4b4b4b;
    }
    .properties .header .small {
        width: 18px;
        height: 18px;
        background: #4b4b4b;
    }
    .body {
        flex: 1;
        display: flex;
    }
    .tabs {
        display: flex;
        flex-direction: column;
        gap: 20px;
        width: 28px;
        padding-top: 14px;
        box-sizing: border-box;
        color: #ddd;
        background: #222;
    }
    .content {
        flex: 1;
        padding: 9px 7px 0 9px;
    }
    .path {
        display: flex;
        align-items: center;
        gap: 8px;
        height: 18px;
        padding-left: 1px;
    }
    .path button {
        margin-left: auto;
    }
    .add-modifier {
        width: 100%;
        height: 18px;
        margin-top: 18px;
        padding: 0 1px 0 7px;
        justify-content: space-between;
        color: #fff;
        background: #317fcf;
        border-radius: 2px 2px 0 0;
    }

    footer {
        display: flex;
        align-items: center;
        gap: 199px;
        height: 19px;
        padding: 0 9px 0 12px;
        color: #b0b0b0;
        background: #2b2b2b;
    }
    footer svg {
        width: 12px;
        height: 16px;
    }
    footer p {
        margin-left: auto;
        white-space: nowrap;
    }

    /* add modifier popup */
    .modifier-menu {
        position: absolute;
        z-index: 2;
        top: 455px;
        right: 10px;
        display: grid;
        grid-template-columns: 163px 144px 139px 126px;
        gap: 7px;
        width: 603px;
        padding: 0 0 4px 3px;
        box-sizing: border-box;
        background: #333;
        box-shadow: 0 2px 6px rgba(0, 0, 0, .5);
    }
    .modifier-menu::after {
        content: "";
        position: absolute;
        top: 31px;
        left: 0;
        right: 0;
        height: 1px;
        background: #444;
    }
    .modifier-menu h2 {
        height: 36px;
        padding: 7px 0 0 5px;
        box-sizing: border-box;
    }
    .item {
        display: flex;
        align-items: center;
        height: 22px;
    }
    .item button {
        justify-content: flex-start;
        gap: 6px;
        width: 100%;
        height: 18px;
        padding-left: 7px;
        border-radius: 2px;
    }
    .item button.active {
        color: #fff;
        background: #317fcf;
    }
    .item u {
        text-decoration: underline #8c8c8c 1px;
        text-underline-offset: 3px;
    }

    .tooltip {
        position: absolute;
        z-index: 1;
        top: 244px;
        left: 206px;
        padding: 10px 13px;
        line-height: 12px;
        color: #fff;
        white-space: nowrap;
        background: #0d0d0d;
        border-radius: 3px;
        box-shadow: 0 2px 6px rgba(0, 0, 0, .5);
    }
    .tooltip em {
        margin-left: 3px;
        font-style: normal;
        color: #a6b8d9;
    }
    .tooltip .soft {
        color: #ccc;
    }

    .pointer {
        position: absolute;
        z-index: 1;
        width: 170px;
        height: 85px;
        fill: #00f288;
        stroke: none;
        pointer-events: none;
    }
    .first {
        top: -102px;
        left: 144px;
    }
    .second {
        top: 133px;
        left: 3px;
    }
</style>
